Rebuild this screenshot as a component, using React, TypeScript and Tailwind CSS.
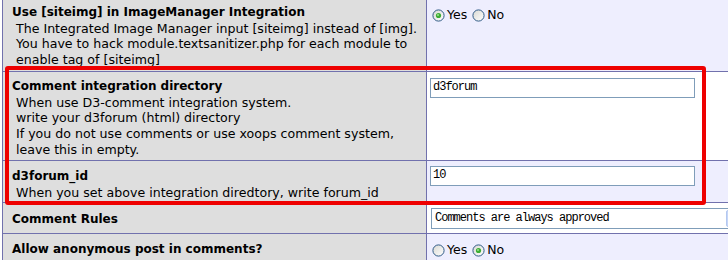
import React from "react";

const Radio = ({ checked }: { checked: boolean }) => (
  <svg width="13" height="13" viewBox="0 0 13 13" className="shrink-0">
    <defs>
      <linearGradient id={checked ? "rg1" : "rg0"} x1="0" y1="0" x2="1" y2="1">
        <stop offset="0" stopColor="#d8d8d2" />
        <stop offset="1" stopColor="#ffffff" />
      </linearGradient>
    </defs>
    <circle cx="6.5" cy="6.5" r="5.6" fill={`url(#${checked ? "rg1" : "rg0"})`} stroke="#2f5a86" strokeWidth="1" />
    {checked && <circle cx="6.5" cy="6.5" r="2.6" fill="#3cad33" />}
    {checked && <circle cx="6" cy="6" r="1" fill="#9be08f" />}
  </svg>
);

const YesNo = ({ yes }: { yes: boolean }) => (
  <div className="flex items-center text-[12.5px] leading-[16px]">
    <Radio checked={yes} />
    <span className="ml-[2px]">Yes</span>
    <span className="ml-[5px]" />
    <Radio checked={!yes} />
    <span className="ml-[2px]">No</span>
  </div>
);

const Row = ({
  h,
  right,
  rightBg,
  children,
}: {
  h: string;
  right: React.ReactNode;
  rightBg: string;
  children: React.ReactNode;
}) => (
  <div className={`flex border-b border-[#7171ad] ${h}`}>
    <div className="w-[424px] shrink-0 bg-[#dedede] border-r border-[#7171ad] pl-[9px]">{children}</div>
    <div className={`flex-1 ${rightBg} pl-[3px]`}>{right}</div>
  </div>
);

const mono = { fontFamily: '"Liberation Mono", monospace' };

export default function App() {
  return (
    <div
      className="relative w-[728px] h-[260px] overflow-hidden bg-white text-black"
      style={{ fontFamily: '"DejaVu Sans", Verdana, sans-serif' }}
    >
      <div className="ml-[2px] border-l border-[#7171ad] text-[12.6px] leading-[15.7px]">
        <Row
          h="h-[72px]"
          rightBg="bg-[#eeeefe]"
          right={
            <div className="pt-[7px] pl-[2px]">
              <YesNo yes={true} />
            </div>
          }
        >
          <div className="pt-[5px]">
            <div className="font-bold text-[12px]">Use [siteimg] in ImageManager Integration</div>
            <div className="pl-[4px]">
              The Integrated Image Manager input [siteimg] instead of [img].
              <br />
              You have to hack module.textsanitizer.php for each module to
              <br />
              enable tag of [siteimg]
            </div>
          </div>
        </Row>
        <Row
          h="h-[89px]"
          rightBg="bg-white"
          right={
            <div className="pt-[6px]">
              <div className="w-[265px] h-[20px] border border-[#7f9db9] bg-white flex items-center pl-[2px] text-[12px] tracking-[-1px]" style={mono}>
                d3forum
              </div>
            </div>
          }
        >
          <div className="pt-[7px]">
            <div className="font-bold text-[12px]">Comment integration directory</div>
            <div className="pl-[4px]">
              When use D3-comment integration system.
              <br />
              write your d3forum (html) directory
              <br />
              If you do not use comments or use xoops comment system,
              <br />
              leave this in empty.
            </div>
          </div>
        </Row>
        <Row
          h="h-[42px]"
          rightBg="bg-[#eeeefe]"
          right={
            <div className="pt-[5px]">
              <div className="w-[265px] h-[20px] border border-[#7f9db9] bg-white flex items-center pl-[2px] text-[12px] tracking-[-1px]" style={mono}>
                10
              </div>
            </div>
          }
        >
          <div className="pt-[8px]">
            <div className="font-bold text-[12px]">d3forum_id</div>
            <div className="pl-[4px]">When you set above integration diredtory, write forum_id</div>
          </div>
        </Row>
        <Row
          h="h-[31px]"
          rightBg="bg-white"
          right={
            <div className="pt-[5px] pl-[1px]">
              <div className="w-[313px] h-[21px] border border-[#7f9db9] bg-white flex items-center">
                <span className="flex-1 pl-[3px] text-[12px] tracking-[-1px]" style={mono}>
                  Comments are always approved
                </span>
                <div className="w-[16px] h-[17px] mr-[1px] bg-[#c6d6f7] border border-[#b4c8f0] rounded-[2px]" />
              </div>
            </div>
          }
        >
          <div className="pt-[9px] font-bold text-[12px]">Comment Rules</div>
        </Row>
        <Row
          h="h-[40px]"
          rightBg="bg-[#eeeefe]"
          right={
            <div className="pt-[8px] pl-[2px]">
              <YesNo yes={false} />
            </div>
          }
        >
          <div className="pt-[8px] font-bold text-[12px]">Allow anonymous post in comments?</div>
        </Row>
      </div>
      <div className="absolute left-[5px] top-[66px] w-[701px] h-[139px] border-[4px] border-[#ee0000] rounded-[3px] pointer-events-none" />
    </div>
  );
}
